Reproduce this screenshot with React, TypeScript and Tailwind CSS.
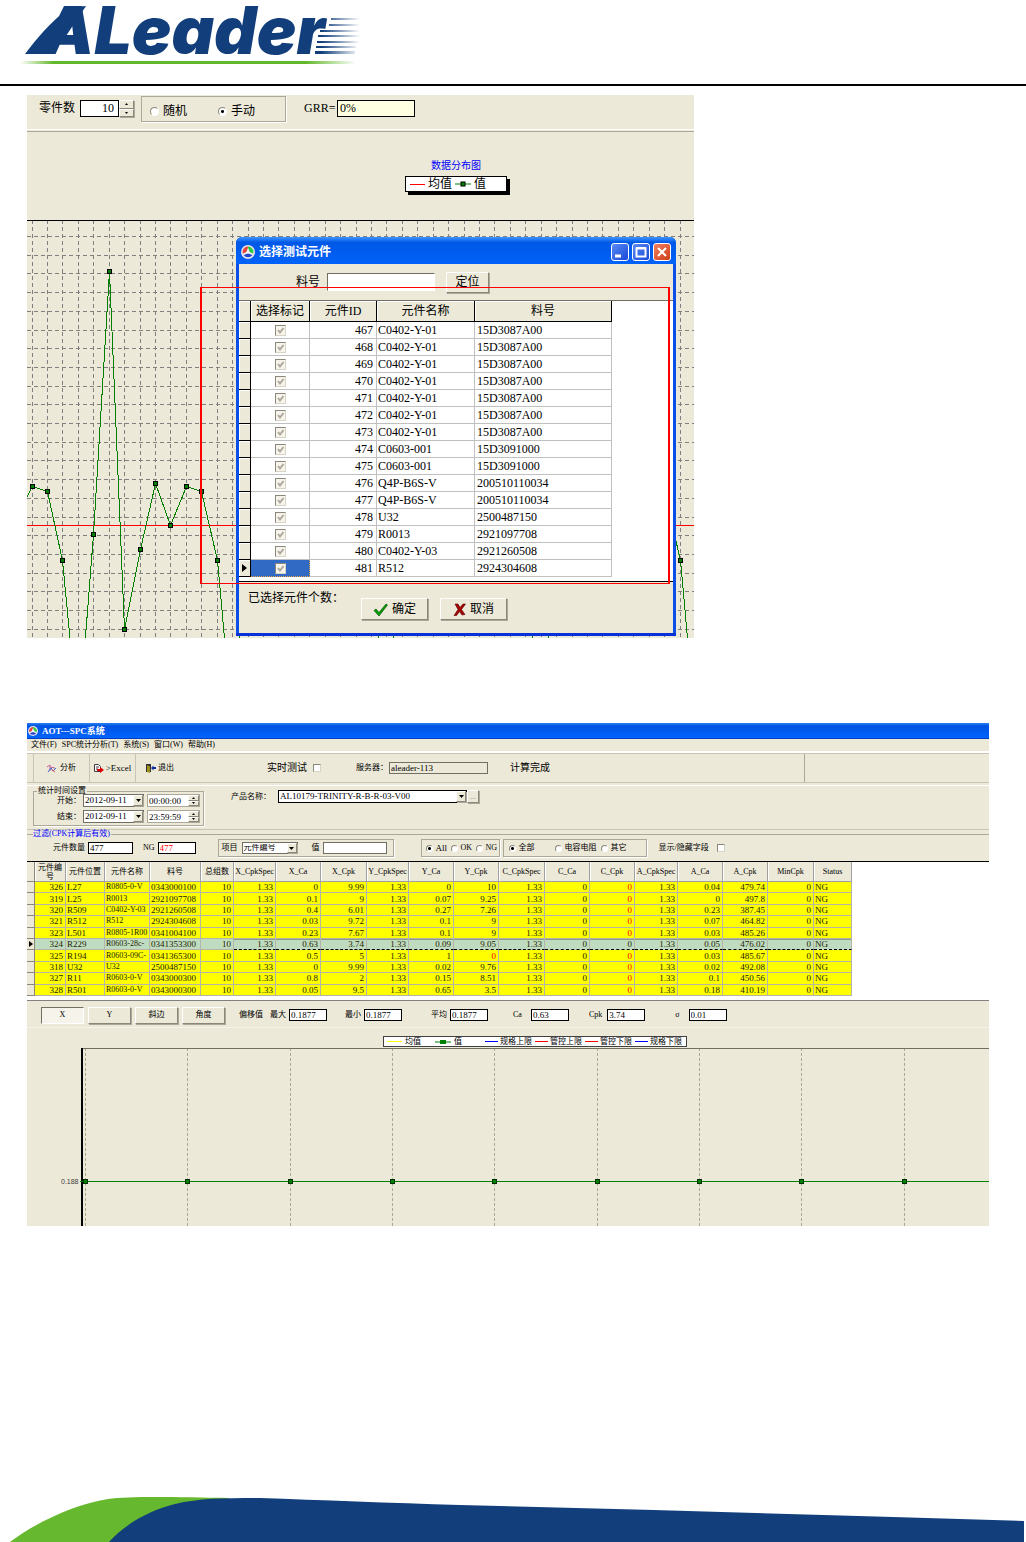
import type { ComponentProps, ReactNode } from "react";
import { twMerge } from "tailwind-merge";

const RAISED =
	"border border-t-white border-l-white border-r-[#8a877a] border-b-[#8a877a] bg-[#ece9d8] shadow-[1px_1px_0_#aca899]";
const GROUP = "border border-[#aca899] shadow-[1px_1px_0_#fff]";

const parts = [
	{ id: 467, name: "C0402-Y-01", no: "15D3087A00" },
	{ id: 468, name: "C0402-Y-01", no: "15D3087A00" },
	{ id: 469, name: "C0402-Y-01", no: "15D3087A00" },
	{ id: 470, name: "C0402-Y-01", no: "15D3087A00" },
	{ id: 471, name: "C0402-Y-01", no: "15D3087A00" },
	{ id: 472, name: "C0402-Y-01", no: "15D3087A00" },
	{ id: 473, name: "C0402-Y-01", no: "15D3087A00" },
	{ id: 474, name: "C0603-001", no: "15D3091000" },
	{ id: 475, name: "C0603-001", no: "15D3091000" },
	{ id: 476, name: "Q4P-B6S-V", no: "200510110034" },
	{ id: 477, name: "Q4P-B6S-V", no: "200510110034" },
	{ id: 478, name: "U32", no: "2500487150" },
	{ id: 479, name: "R0013", no: "2921097708" },
	{ id: 480, name: "C0402-Y-03", no: "2921260508" },
	{ id: 481, name: "R512", no: "2924304608" },
];

const columns = [
	{ label: "元件编号", width: 31 },
	{ label: "元件位置", width: 39 },
	{ label: "元件名称", width: 45 },
	{ label: "料号", width: 51 },
	{ label: "总组数", width: 33 },
	{ label: "X_CpkSpec", width: 42 },
	{ label: "X_Ca", width: 45 },
	{ label: "X_Cpk", width: 46 },
	{ label: "Y_CpkSpec", width: 42 },
	{ label: "Y_Ca", width: 45 },
	{ label: "Y_Cpk", width: 45 },
	{ label: "C_CpkSpec", width: 46 },
	{ label: "C_Ca", width: 45 },
	{ label: "C_Cpk", width: 45 },
	{ label: "A_CpkSpec", width: 43 },
	{ label: "A_Ca", width: 45 },
	{ label: "A_Cpk", width: 45 },
	{ label: "MinCpk", width: 46 },
	{ label: "Status", width: 38 },
];

const leftAligned = [1, 2, 3, 18];

const results = [
	["326", "L27", "R0805-0-V", "0343000100", "10", "1.33", "0", "9.99", "1.33", "0", "10", "1.33", "0", "0", "1.33", "0.04", "479.74", "0", "NG"],
	["319", "L25", "R0013", "2921097708", "10", "1.33", "0.1", "9", "1.33", "0.07", "9.25", "1.33", "0", "0", "1.33", "0", "497.8", "0", "NG"],
	["320", "R509", "C0402-Y-03", "2921260508", "10", "1.33", "0.4", "6.01", "1.33", "0.27", "7.26", "1.33", "0", "0", "1.33", "0.23", "387.45", "0", "NG"],
	["321", "R512", "R512", "2924304608", "10", "1.33", "0.03", "9.72", "1.33", "0.1", "9", "1.33", "0", "0", "1.33", "0.07", "464.82", "0", "NG"],
	["323", "L501", "R0805-1R00", "0341004100", "10", "1.33", "0.23", "7.67", "1.33", "0.1", "9", "1.33", "0", "0", "1.33", "0.03", "485.26", "0", "NG"],
	["324", "R229", "R0603-28c-", "0341353300", "10", "1.33", "0.63", "3.74", "1.33", "0.09", "9.05", "1.33", "0", "0", "1.33", "0.05", "476.02", "0", "NG"],
	["325", "R194", "R0603-09C-", "0341365300", "10", "1.33", "0.5", "5", "1.33", "1", "0", "1.33", "0", "0", "1.33", "0.03", "485.67", "0", "NG"],
	["318", "U32", "U32", "2500487150", "10", "1.33", "0", "9.99", "1.33", "0.02", "9.76", "1.33", "0", "0", "1.33", "0.02", "492.08", "0", "NG"],
	["327", "R11", "R0603-0-V", "0343000300", "10", "1.33", "0.8", "2", "1.33", "0.15", "8.51", "1.33", "0", "0", "1.33", "0.1", "450.56", "0", "NG"],
	["328", "R501", "R0603-0-V", "0343000300", "10", "1.33", "0.05", "9.5", "1.33", "0.65", "3.5", "1.33", "0", "0", "1.33", "0.18", "410.19", "0", "NG"],
];

const selectedId = "324";

// One period of the distribution curve, repeated across the chart
const wave = [266, 271, 340, 506, 314, 51, 409, 329, 263, 305];
const wavePoints = Array.from({ length: 44 }, (_, i) => ({
	x: Math.round(4.5 + i * 15.43),
	y: wave[i % wave.length],
}));

const trendX = [58, 160, 263, 365, 467, 570, 672, 774, 877];

function Logo() {
	return (
		<svg
			role="img"
			aria-label="ALeader"
			className="ml-5 h-[70px] w-[345px] overflow-visible"
			viewBox="20 0 345 70"
		>
			<defs>
				<linearGradient id="stripe" gradientUnits="userSpaceOnUse" x1="305" x2="360" y1="0" y2="0">
					<stop offset="0.3" stopColor="#123f7c" />
					<stop offset="1" stopColor="#123f7c" stopOpacity="0" />
				</linearGradient>
				<linearGradient id="underline" x1="0" x2="1" y1="0" y2="0">
					<stop offset="0" stopColor="#63b82c" stopOpacity="0" />
					<stop offset="0.1" stopColor="#63b82c" />
					<stop offset="0.85" stopColor="#63b82c" />
					<stop offset="1" stopColor="#63b82c" stopOpacity="0" />
				</linearGradient>
			</defs>
			<g fill="url(#stripe)">
				<rect x="331" y="18" width="30" height="2" />
				<rect x="329" y="24" width="32" height="2" />
				<rect x="320" y="30" width="40" height="2" />
				<rect x="318" y="35" width="41" height="2" />
				<rect x="317" y="41" width="41" height="2" />
				<rect x="316" y="46" width="40" height="2" />
				<rect x="315" y="51" width="40" height="3" />
			</g>
			<path d="M25 54C38 37 50 23 62 14 70 9 78 6 86 6L62 42 46 54z" fill="#123f7c" />
			<text
				x="42"
				y="54"
				fill="#123f7c"
				className="font-['Inter','Liberation_Sans',sans-serif] text-[66px] font-black italic"
			>
				ALeader
			</text>
			<rect x="20" y="61" width="336" height="3" fill="url(#underline)" />
		</svg>
	);
}

function AppIcon({ className }: { className?: string }) {
	return (
		<svg aria-hidden="true" viewBox="0 0 14 14" className={twMerge("size-3.5 shrink-0", className)}>
			<circle cx="7" cy="7" r="7" fill="#e4e4ea" />
			<path d="M7 1.5A5.5 5.5 0 0 0 1.8 8.5L5 7.2 7 3.5z" fill="#e8433b" />
			<path d="M7 1.5A5.5 5.5 0 0 1 12.2 8.5L9 7.2 7 3.5z" fill="#2ccc3c" />
			<path d="M2.6 10A5.5 5.5 0 0 0 11.4 10L9 8.8H5z" fill="#2346cf" />
			<path d="M7 3.5v3.7M7 7.2 3.4 9.4M7 7.2l3.6 2.2" stroke="#fff" fill="none" />
		</svg>
	);
}

function Radio({ label, className, ...props }: ComponentProps<"input"> & { label: string }) {
	return (
		<label className={twMerge("flex items-center gap-[3px] whitespace-nowrap", className)}>
			<input
				type="radio"
				className="size-[7px] shrink-0 appearance-none rounded-full border border-t-[#8a877a] border-l-[#8a877a] border-r-white border-b-white bg-white checked:bg-[radial-gradient(circle,#000_1px,#fff_2px)]"
				{...props}
			/>
			{label}
		</label>
	);
}

function TextField({ label, className, ...props }: ComponentProps<"input"> & { label: string }) {
	return (
		<label className="flex shrink-0 items-center gap-[3px] whitespace-nowrap">
			{label}
			<input
				type="text"
				className={twMerge("h-3 w-[38px] border border-black bg-white px-px text-[9px] leading-none", className)}
				{...props}
			/>
		</label>
	);
}

function Caret({ up }: { up?: boolean }) {
	return (
		<svg aria-hidden="true" viewBox="0 0 5 3" className="h-[3px] w-[5px]">
			<path d={up ? "M0 3h5L2.5 0z" : "M0 0h5L2.5 3z"} />
		</svg>
	);
}

function Spinner({ className }: { className?: string }) {
	return (
		<span className={twMerge("flex h-3 w-[11px] flex-col [&_svg]:h-0.5 [&_svg]:w-[3px]", className)}>
			<button type="button" aria-label="增加" className={twMerge("flex flex-1 items-center justify-center", RAISED)}>
				<Caret up />
			</button>
			<button type="button" aria-label="减少" className={twMerge("flex flex-1 items-center justify-center", RAISED)}>
				<Caret />
			</button>
		</span>
	);
}

function Combo({ label, value, className }: { label: string; value: string; className?: string }) {
	return (
		<span className={twMerge("relative flex h-[13px] shrink-0 border border-[#716f64] bg-white", className)}>
			<select aria-label={label} className="w-full appearance-none bg-transparent pl-px pr-3 leading-none">
				<option>{value}</option>
			</select>
			<span className={twMerge("pointer-events-none absolute inset-y-0 right-0 flex w-2.5 items-center justify-center", RAISED)}>
				<Caret />
			</span>
		</span>
	);
}

function DateRow({ label, time }: { label: string; time: string }) {
	return (
		<div className="flex items-center">
			<span className="w-[26px]">{label}</span>
			<Combo label={`${label}日期`} value="2012-09-11" className="w-[61px] text-[9px]" />
			<span className="ml-[3px] flex h-[13px] w-[53px] items-center border border-[#aca899] bg-white">
				<input aria-label={`${label}时间`} defaultValue={time} className="w-10 px-px text-[9px] leading-none" />
				<Spinner className="h-[11px]" />
			</span>
		</div>
	);
}

function WindowButton({ label, className, children }: { label: string; className?: string; children: ReactNode }) {
	return (
		<button
			type="button"
			aria-label={label}
			className={twMerge(
				"flex size-[18px] items-center justify-center rounded-[3px] border border-white bg-linear-to-br from-[#5a8af5] to-[#1b46d8]",
				className,
			)}
		>
			<svg aria-hidden="true" viewBox="0 0 16 16" className="size-4" fill="none" stroke="#fff" strokeWidth="2">
				{children}
			</svg>
		</button>
	);
}

function DistributionChart() {
	return (
		<svg aria-label="数据分布图" role="img" className="block h-[418px] w-full">
			<g stroke="#808080" strokeDasharray="4 3">
				{wavePoints.map((p) => (
					<line key={p.x} x1={p.x + 0.5} x2={p.x + 0.5} y1="0" y2="100%" />
				))}
				{Array.from({ length: 22 }, (_, i) => Math.round(16 + i * 18.7) + 0.5).map((y) => (
					<line key={y} x1="0" x2="100%" y1={y} y2={y} />
				))}
			</g>
			<line x1="0" x2="100%" y1="0.5" y2="0.5" stroke="#000" />
			<line x1="0" x2="100%" y1="305.5" y2="305.5" stroke="#f00" />
			<polyline
				points={`0,277 ${wavePoints.map((p) => `${p.x + 0.5},${p.y + 0.5}`).join(" ")}`}
				fill="none"
				stroke="#008000"
				shapeRendering="crispEdges"
			/>
			{wavePoints.map((p) => (
				<rect key={p.x} x={p.x - 1.5} y={p.y - 1.5} width="4" height="4" fill="#008000" stroke="#000" />
			))}
		</svg>
	);
}

function PartTable() {
	return (
		<table className="w-[373px] table-fixed border-separate border-spacing-0">
			<colgroup>
				<col className="w-[12px]" />
				<col className="w-[59px]" />
				<col className="w-[67px]" />
				<col className="w-[98px]" />
				<col className="w-[137px]" />
			</colgroup>
			<thead>
				<tr className="h-[21px]">
					{["", "选择标记", "元件ID", "元件名称", "料号"].map((h) => (
						<th
							key={h}
							className="border-r border-b border-black bg-[#ece9d8] p-0 font-normal shadow-[inset_1px_1px_0_#fff]"
						>
							{h}
						</th>
					))}
				</tr>
			</thead>
			<tbody>
				{parts.map((part) => {
					const isCurrent = part.id === 481;
					return (
						<tr key={part.id} className="h-[17px] leading-4">
							<td className="border-r border-b border-black bg-[#ece9d8] p-0 shadow-[inset_1px_1px_0_#fff]">
								{isCurrent && (
									<svg aria-hidden="true" viewBox="0 0 5 8" className="mx-auto h-2 w-[5px]">
										<path d="M0 0v8l5-4z" />
									</svg>
								)}
							</td>
							<td
								className={twMerge(
									"border-r border-b border-[#c0c0c0] p-0",
									isCurrent && "border-dotted border-[#e0a040] bg-[#316ac5]",
								)}
							>
								<span className="relative mx-auto block size-[11px]">
									<input
										type="checkbox"
										defaultChecked
										disabled
										aria-label={`选择 ${part.id}`}
										className="block size-[11px] appearance-none border border-t-[#8a877a] border-l-[#8a877a] border-r-[#d8d4c4] border-b-[#d8d4c4] bg-[#f6f4ec]"
									/>
									<svg aria-hidden="true" viewBox="0 0 11 11" className="absolute inset-0 size-[11px]">
										<path d="M3 5l2 2.5L8.500 3" fill="none" stroke="#aca899" strokeWidth="2" />
									</svg>
								</span>
							</td>
							<td className="border-r border-b border-[#c0c0c0] p-0 pr-[3px] text-right">{part.id}</td>
							<td className="border-r border-b border-[#c0c0c0] p-0 pl-px">{part.name}</td>
							<td className="border-r border-b border-[#c0c0c0] p-0 pl-0.5">{part.no}</td>
						</tr>
					);
				})}
			</tbody>
		</table>
	);
}

function PartDialog() {
	return (
		<div
			role="dialog"
			aria-label="选择测试元件"
			className="absolute top-[142px] left-[209px] flex h-[399px] w-[440px] flex-col overflow-hidden rounded-t-md border-b-[3px] border-[#0831d9] bg-[#0a50e8] px-[3px]"
		>
			<div className="-mx-[3px] flex h-[27px] shrink-0 items-center gap-1 bg-linear-to-b from-[#3d95ff] via-[#0058e6] via-20% to-[#0062fa] pt-0.5 pr-[5px] pl-[5px] text-white">
				<AppIcon />
				<span className="flex-1 text-[12px] font-bold">选择测试元件</span>
				<div className="flex gap-[3px]">
					<WindowButton label="最小化">
						<path d="M3 12h6" strokeWidth="3" />
					</WindowButton>
					<WindowButton label="最大化">
						<path d="M3.500 4.500h9v8h-9z" />
						<path d="M3 4h10" />
					</WindowButton>
					<WindowButton label="关闭" className="from-[#f08060] to-[#d03a10]">
						<path d="M4 4l8 8M12 4l-8 8" />
					</WindowButton>
				</div>
			</div>
			<div className="flex flex-1 flex-col bg-[#ece9d8]">
				<div className="flex h-[36px] shrink-0 items-center pl-[57px]">
					<label className="flex items-center gap-[7px]">
						料号
						<input
							type="text"
							className="h-[18px] w-[108px] border border-t-[#716f64] border-l-[#716f64] border-r-white border-b-white bg-white px-1"
						/>
					</label>
					<button type="button" className={twMerge("ml-[11px] h-[21px] w-[43px] leading-none", RAISED)}>
						定位
					</button>
				</div>
				<div className="h-[282px] shrink-0 border-t border-b border-t-[#716f64] border-b-black bg-white">
					<PartTable />
				</div>
				<div className="flex flex-1 items-start pt-2 pl-[9px]">
					<span className="w-[113px]">已选择元件个数：</span>
					<button
						type="button"
						className={twMerge("mt-2 flex h-[22px] w-[67px] items-center justify-center gap-1", RAISED)}
					>
						<svg aria-hidden="true" viewBox="0 0 15 13" className="h-[13px] w-[15px]">
							<path d="M1 7.500 3 6l3 3.500L13 1l1.500 1L6 13z" fill="#00a000" stroke="#004000" strokeWidth=".6" />
						</svg>
						确定
					</button>
					<button
						type="button"
						className={twMerge("mt-2 ml-3 flex h-[22px] w-[67px] items-center justify-center gap-1", RAISED)}
					>
						<svg aria-hidden="true" viewBox="0 0 13 13" className="size-[13px]">
							<path d="M2 1h3l2 3.500L10 1h2.500L8.500 6.500 12 11.500 9 12 6.500 8.500 3.500 12.500H1L5 6.500z" fill="#a80000" stroke="#500" strokeWidth=".6" />
						</svg>
						取消
					</button>
				</div>
			</div>
		</div>
	);
}

function SamplingPanel() {
	return (
		<section className="relative w-full max-w-[667px] overflow-hidden bg-[#ece9d8] text-[12px] leading-4">
			<div className="flex h-[35px] items-start border-b border-white pt-px pl-3">
				<label htmlFor="part-count" className="mt-1 w-10">
					零件数
				</label>
				<span className="mt-1 ml-px flex h-[17px] w-[54px]">
					<input
						id="part-count"
						defaultValue="10"
						className="w-[39px] border border-black bg-white pr-1 text-right leading-none"
					/>
					<Spinner className="h-[17px] w-[15px]" />
				</span>
				<div role="radiogroup" aria-label="取样方式" className={twMerge("ml-[7px] flex h-[26px] w-[145px] pl-2 pt-1", GROUP)}>
					<Radio name="mode" label="随机" className="w-[68px] gap-1 [&>input]:size-[9px]" />
					<Radio name="mode" label="手动" defaultChecked className="gap-1 [&>input]:size-[9px]" />
				</div>
				<label className="mt-1 ml-[18px] flex">
					<span className="w-[33px]">GRR=</span>
					<input readOnly value="0%" className="h-[17px] w-[78px] border border-black bg-[#ffffe1] px-0.5 leading-none" />
				</label>
			</div>
			<div className="mt-px flex h-[89px] flex-col border-t border-[#aca899] pl-[378px]">
				<h2 className="mt-[26px] w-[102px] text-center text-[10px] text-[#00f]">数据分布图</h2>
				<div className="mt-0.5 flex h-4 w-[102px] items-center gap-[3px] border border-black bg-white pl-1 whitespace-nowrap shadow-[3px_3px_0_#000]">
					<span className="h-px w-[15px] bg-[#f00]" />
					<span>均值</span>
					<svg aria-hidden="true" className="h-1.5 w-4" viewBox="0 0 16 6">
						<path d="M0 3h16" stroke="#008000" />
						<rect x="6" y="1" width="4" height="4" fill="#008000" stroke="#000" />
					</svg>
					<span>值</span>
				</div>
			</div>
			<DistributionChart />
			<PartDialog />
			<div className="absolute top-[192px] left-[173px] h-[297px] w-[470px] border-x-2 border-y border-[#f00]" />
		</section>
	);
}

function ResultTable() {
	return (
		<table className="h-[134px] w-[825px] table-fixed border-separate border-spacing-0 text-[9px] leading-[10px] whitespace-nowrap">
			<colgroup>
				<col style={{ width: 8 }} />
				{columns.map((c) => (
					<col key={c.label} style={{ width: c.width }} />
				))}
			</colgroup>
			<thead>
				<tr className="h-5 text-[8px] leading-[9px]">
					<th aria-label="当前行" className="border-r border-b border-[#8a877a] bg-[#ece9d8] p-0" />
					{columns.map((c) => (
						<th
							key={c.label}
							className={twMerge(
								"border-r border-b border-[#a0a0a0] bg-[#ece9d8] p-0 font-normal shadow-[inset_1px_0_0_#fff]",
								c.label === "元件编号" && "px-[3px] whitespace-normal",
							)}
						>
							{c.label}
						</th>
					))}
				</tr>
			</thead>
			<tbody>
				{results.map((row) => {
					const isSelected = row[0] === selectedId;
					return (
						<tr key={row[0]} className={isSelected ? "bg-[#c0dcc0]" : "bg-[#ff0]"}>
							<td className="border-r border-b border-[#8a877a] bg-[#ece9d8] p-0">
								{isSelected && (
									<svg aria-hidden="true" viewBox="0 0 4 6" className="mx-auto h-1.5 w-1">
										<path d="M0 0v6l4-3z" />
									</svg>
								)}
							</td>
							{row.map((value, i) => (
								<td
									key={columns[i].label}
									className={twMerge(
										"border-r border-b border-[#b4b4a8] p-0 pr-0.5 text-right text-[#222200]",
										leftAligned.includes(i) && "pr-0 pl-px text-left",
										i === 2 && "text-[8px]",
										isSelected && i > 4 && "border-b-black [border-bottom-style:dashed] shadow-[inset_0_1px_0_#8a9a8a]",
										!isSelected && value === "0" && (i === 13 || i === 10) && "text-[#f00]",
									)}
								>
									{value}
								</td>
							))}
						</tr>
					);
				})}
			</tbody>
		</table>
	);
}

function SpcToolbar() {
	return (
		<div className="flex h-[29px] items-center border-b border-[#c8c5b4]">
			<button type="button" className="ml-1.5 flex h-full w-[57px] items-center justify-center gap-1 border-x border-[#c8c5b4]">
				<svg aria-hidden="true" viewBox="0 0 9 9" className="size-[9px]" fill="none">
					<path d="M0 3l3-2v6M3 3l5 1" stroke="#c060a0" />
					<path d="M1 8l3-4 2 3 3-3" stroke="#4060d0" />
					<path d="M5 6l3 2" stroke="#e05050" />
				</svg>
				分析
			</button>
			<button type="button" className="flex h-full w-[46px] items-center justify-center gap-0.5 border-r border-[#c8c5b4]">
				<svg aria-hidden="true" viewBox="0 0 10 9" className="h-[9px] w-2.5">
					<path d="M.5.5h4l2 2v5h-6zM2 3h3M2 5h2" fill="#fff" stroke="#404040" />
					<path d="M3 5h3V3l4 3-4 3V7H3z" fill="#e00000" />
				</svg>
				<span className="text-[9px]">&gt;Excel</span>
			</button>
			<button type="button" className="ml-[9px] flex items-center gap-0.5">
				<svg aria-hidden="true" viewBox="0 0 11 9" className="h-[9px] w-[11px]">
					<path d="M1 0h5v8H1z" fill="#303030" />
					<path d="M2 1l3 1.500V9L2 8z" fill="#a09020" />
					<path d="M6 4l2.500-2.500V3H11v2H8.500v1.500z" fill="#1030a0" />
				</svg>
				退出
			</button>
			<label className="ml-[93px] flex items-center gap-[6px] text-[10px]">
				实时测试
				<input
					type="checkbox"
					className="size-2 appearance-none border border-t-[#8a877a] border-l-[#8a877a] border-r-[#d8d4c4] border-b-[#d8d4c4] bg-white"
				/>
			</label>
			<div className="ml-[35px]">
				<TextField
					label="服务器："
					defaultValue="aleader-113"
					readOnly
					className="-ml-0.5 w-[99px] border-[#716f64] bg-[#ece9d8]"
				/>
			</div>
			<output className="ml-[22px] text-[10px]">计算完成</output>
			<span className="ml-[254px] h-full border-l border-[#aca899]" />
		</div>
	);
}

function QueryBar() {
	return (
		<div className="flex h-[44px] items-start border-b border-[#c8c5b4] pl-1.5">
			<fieldset className={twMerge("mt-px h-[39px] w-[171px] pl-[23px]", GROUP)}>
				<legend className="-ml-5 px-px leading-none">统计时间设置</legend>
				<div className="-mt-px flex flex-col gap-[3px]">
					<DateRow label="开始：" time="00:00:00" />
					<DateRow label="结束：" time="23:59:59" />
				</div>
			</fieldset>
			<div className="mt-1 ml-[27px] flex items-center">
				<span className="w-[47px]">产品名称：</span>
				<Combo label="产品名称" value="AL10179-TRINITY-R-B-R-03-V00" className="w-[189px] border-black text-[9px]" />
				<button type="button" aria-label="更多" className={twMerge("h-[13px] w-3 leading-none text-[#808080]", RAISED)}>
					...
				</button>
			</div>
		</div>
	);
}

function FilterBar() {
	return (
		<fieldset className="h-[31px] border-t border-[#aca899]">
			<legend className="ml-1.5 pr-px leading-none text-[#00f]">过滤(CPK计算后有效)</legend>
			<div className="flex items-center pt-px pl-[26px]">
				<TextField label="元件数量" defaultValue="477" className="w-[45px]" />
				<span className="ml-[10px]">
					<TextField label="NG" defaultValue="477" className="w-[38px] text-[#f00]" />
				</span>
				<div className={twMerge("ml-[22px] flex h-[18px] w-[176px] items-center pl-[3px]", GROUP)}>
					<span className="mr-1">项目</span>
					<Combo label="项目" value="元件编号" className="h-3 w-[56px]" />
					<span className="ml-[14px]">
						<TextField label="值" className="w-16 border-[#716f64]" />
					</span>
				</div>
				<div role="radiogroup" aria-label="结果" className={twMerge("ml-[27px] flex h-[18px] w-[79px] items-center pl-1", GROUP)}>
					<Radio name="status" label="All" defaultChecked className="w-[25px] text-[9px]" />
					<Radio name="status" label="OK" className="w-[25px]" />
					<Radio name="status" label="NG" />
				</div>
				<div role="radiogroup" aria-label="类型" className={twMerge("ml-[3px] flex h-[18px] w-[144px] items-center pl-[5px]", GROUP)}>
					<Radio name="kind" label="全部" defaultChecked className="w-[46px]" />
					<Radio name="kind" label="电容电阻" className="w-[46px]" />
					<Radio name="kind" label="其它" />
				</div>
				<label className="ml-3 flex items-center gap-2">
					显示/隐藏字段
					<input
						type="checkbox"
						className="size-2 appearance-none border border-t-[#8a877a] border-l-[#8a877a] border-r-[#d8d4c4] border-b-[#d8d4c4] bg-white"
					/>
				</label>
			</div>
		</fieldset>
	);
}

function AxisBar() {
	return (
		<div className="flex h-[27px] items-center border-t border-[#808080] pt-0.5 pl-[14px]">
			<div className="flex gap-1">
				{["X", "Y", "斜边", "角度"].map((axis) => (
					<button
						key={axis}
						type="button"
						className={twMerge(
							"h-[17px] w-[43px] leading-none",
							RAISED,
							axis === "X" && "border-t-[#716f64] border-l-[#716f64] border-r-white border-b-white bg-[#f5f3ea] shadow-none",
						)}
					>
						{axis}
					</button>
				))}
			</div>
			<span className="ml-[14px]">偏移值</span>
			<div className="ml-[7px] flex">
				<span className="w-[75px]">
					<TextField label="最大" defaultValue="0.1877" />
				</span>
				<span className="w-[86px]">
					<TextField label="最小" defaultValue="0.1877" />
				</span>
				<span className="w-[82px]">
					<TextField label="平均" defaultValue="0.1877" />
				</span>
			</div>
			<div className="flex gap-5">
				<TextField label="Ca" defaultValue="0.63" className="ml-1.5" />
				<TextField label="Cpk" defaultValue="3.74" className="ml-0.5" />
				<span className="ml-[10px]">
					<TextField label="σ" defaultValue="0.01" className="ml-1.5" />
				</span>
			</div>
		</div>
	);
}

const limits = [
	{ label: "规格上限", line: "bg-[#00f]" },
	{ label: "管控上限", line: "bg-[#f00]" },
	{ label: "管控下限", line: "bg-[#f00]" },
	{ label: "规格下限", line: "bg-[#00f]" },
];

function TrendChart() {
	return (
		<>
			<div className="flex h-[21px] items-start border-t border-[#f5f3ea] pt-2 pl-[356px]">
				<div className="flex h-[11px] w-[304px] items-center gap-[3px] border border-[#404040] bg-white pl-[3px] leading-none">
					<span className="h-px w-[15px] bg-[#ff0]" />
					<span className="mr-[11px]">均值</span>
					<svg aria-hidden="true" className="h-1.5 w-4" viewBox="0 0 16 6">
						<path d="M0 3h16" stroke="#008000" />
						<rect x="5" y="1" width="6" height="4" fill="#008000" />
					</svg>
					<span className="mr-5">值</span>
					{limits.map(({ label, line }) => (
						<span key={label} className="flex items-center gap-0.5 whitespace-nowrap">
							<span className={twMerge("h-px w-[13px]", line)} />
							{label}
						</span>
					))}
				</div>
			</div>
			<svg role="img" aria-label="趋势图" className="block h-[178px] w-full">
				<g stroke="#aca899" strokeDasharray="3 2">
					{trendX.map((x) => (
						<line key={x} x1={x + 0.5} x2={x + 0.5} y1="0" y2="100%" />
					))}
				</g>
				<line x1="54" x2="100%" y1="0.5" y2="0.5" stroke="#716f64" />
				<line x1="55" x2="55" y1="0" y2="100%" stroke="#000" strokeWidth="2" />
				<text x="34" y="136" fill="#404040" className="font-['Liberation_Sans',sans-serif] text-[7px]">
					0.188
				</text>
				<line x1="53" x2="100%" y1="133.5" y2="133.5" stroke="#008000" />
				{trendX.map((x) => (
					<rect key={x} x={x - 1.5} y="131.5" width="4" height="4" fill="#008000" stroke="#003000" />
				))}
			</svg>
		</>
	);
}

const menuItems = ["文件(F)", "SPC统计分析(T)", "系统(S)", "窗口(W)", "帮助(H)"];

function SpcWindow() {
	return (
		<section className="mt-[85px] overflow-hidden bg-[#ece9d8] text-[8px] leading-[10px]">
			<div className="flex h-4 items-center gap-1 border-b border-[#0040c0] bg-linear-to-b from-[#2a80f0] via-[#0053e1] via-20% to-[#0064ff] pl-px text-white">
				<AppIcon className="size-2.5" />
				<h2 className="text-[9px] font-bold">AOT---SPC系统</h2>
			</div>
			<nav className="flex h-3 items-center gap-[5px] pl-1">
				{menuItems.map((item) => (
					<button key={item} type="button" className="whitespace-nowrap">
						{item}
					</button>
				))}
			</nav>
			<div className="border-t-2 border-b border-white border-b-[#c8c5b4]" />
			<SpcToolbar />
			<div className="mt-0.5 border-t border-white" />
			<QueryBar />
			<FilterBar />
			<div className="border-t border-black bg-white pb-1">
				<ResultTable />
			</div>
			<AxisBar />
			<TrendChart />
		</section>
	);
}

function Footer() {
	return (
		<footer className="mt-auto">
			<svg aria-hidden="true" viewBox="0 0 1026 46" preserveAspectRatio="none" className="block h-[46px] w-full">
				<path d="M10 46C35 27 75 8 108 3 130 0 175 1 230 2L140 46z" fill="#66b82e" />
				<path d="M109 46C125 28 150 14 175 8 200 2 225 2 260 2 320 4 390 7 460 9L654 14 893 21 1024 25V46z" fill="#123f7c" />
			</svg>
		</footer>
	);
}

export default function App() {
	return (
		<div className="flex min-h-screen flex-col bg-white font-['Liberation_Serif','Noto_Sans_CJK_SC',serif] text-black">
			<header className="h-[86px] border-b-2 border-black">
				<Logo />
			</header>
			<main className="pt-[9px] pr-[37px] pl-[27px]">
				<SamplingPanel />
				<SpcWindow />
			</main>
			<Footer />
		</div>
	);
}
